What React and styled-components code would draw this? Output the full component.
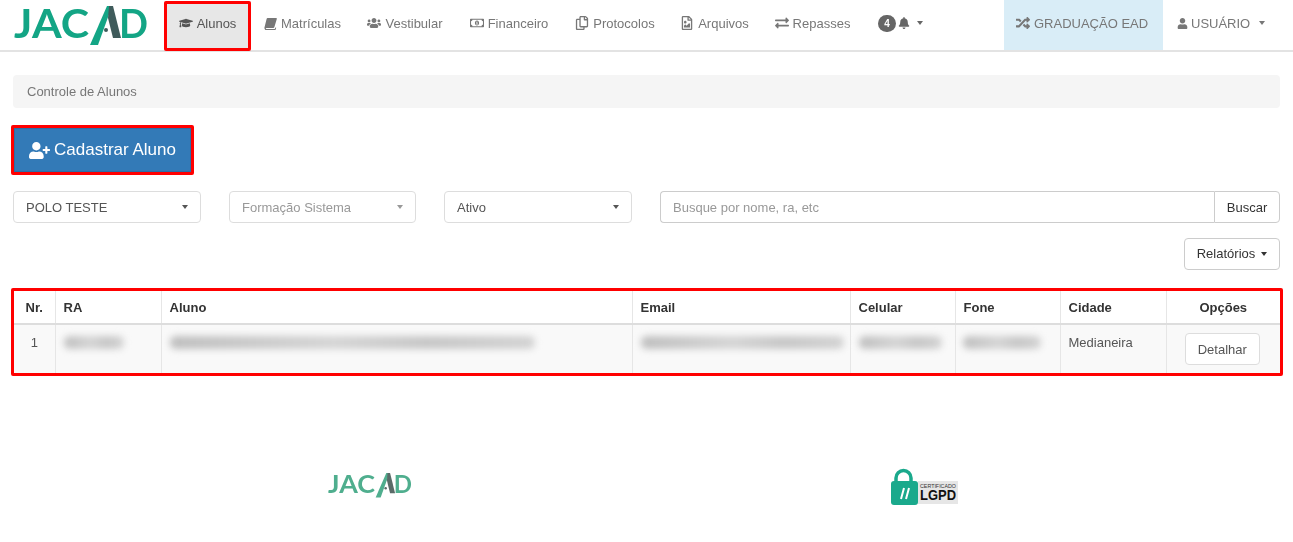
import React from 'react'
import styled, { createGlobalStyle } from 'styled-components'
import {
  FaGraduationCap, FaUsers, FaRegMoneyBillAlt, FaRegCopy, FaRegFileImage,
  FaExchangeAlt, FaBell, FaRandom, FaUser, FaUserPlus,
} from 'react-icons/fa'

const GlobalStyle = createGlobalStyle`
  html, body {
    margin: 0;
    background: #fff;
    font-family: "Liberation Sans", Arial, sans-serif;
    font-size: 13px;
    color: #555;
  }
  * { box-sizing: border-box; }
`

// font awesome 4 book, slanted, not in the packages
const SlantedBook = () => (
  <svg width="13" height="13" viewBox="0 0 13 13" fill="currentColor">
    <path d="M3.6 1h8.6c.5 0 .8.4.6.9L10.4 10c-.2.6-.6.9-1.2.9H2.6c-.5 0-.8.2-.8.5s.3.6.8.6h8.2l.5-1.6.9.3-.8 2.6c-.1.4-.3.6-.7.6H2.4C1.2 13 .3 12.1.4 10.9c0-.3.1-.6.2-.9l2-8c.1-.6.5-1 1-1z" />
  </svg>
)

const navItems = [
  { label: 'Alunos', icon: FaGraduationCap, active: true, width: 87 },
  { label: 'Matrículas', icon: SlantedBook, width: 103 },
  { label: 'Vestibular', icon: FaUsers, width: 102 },
  { label: 'Financeiro', icon: FaRegMoneyBillAlt, width: 106 },
  { label: 'Protocolos', icon: FaRegCopy, width: 106 },
  { label: 'Arquivos', icon: FaRegFileImage, width: 93 },
  { label: 'Repasses', icon: FaExchangeAlt, width: 103 },
]

const Logo = ({ width, main, dark }) => (
  <LogoSvg width={width} viewBox="0 0 134 42" role="img" aria-label="JACAD">
    <text x="0" y="34" fontFamily="Lato, sans-serif" fontWeight="700" fontSize="40" fill={main} textLength="75" lengthAdjust="spacingAndGlyphs">JAC</text>
    <polygon points="76,41 93,2 98,2 84,41" fill={main} />
    <polygon points="95,2 99,2 107,34 99,34 94,14" fill={dark} />
    <circle cx="92" cy="26" r="2" fill={dark} />
    <text x="105" y="34" fontFamily="Lato, sans-serif" fontWeight="700" fontSize="40" fill={main} textLength="29" lengthAdjust="spacingAndGlyphs">D</text>
  </LogoSvg>
)

const LgpdSeal = () => (
  <svg width="68" height="37" viewBox="0 0 68 37" role="img" aria-label="Certificado LGPD">
    <path d="M6 14 V10 a7.5 7.5 0 0 1 15 0 V14" fill="none" stroke="#1aa98c" strokeWidth="3.5" />
    <rect x="1" y="13" width="27" height="24" rx="3" fill="#1aa98c" />
    <path d="M11 31 L14 20 M16 31 L19 20" stroke="#fff" strokeWidth="2" />
    <rect x="28" y="13" width="40" height="23" fill="#e6e6e6" />
    <text x="30" y="20" fontFamily="Liberation Sans, sans-serif" fontSize="5" fill="#333" textLength="36" lengthAdjust="spacingAndGlyphs">CERTIFICADO</text>
    <text x="30" y="32" fontFamily="Liberation Sans, sans-serif" fontWeight="700" fontSize="14" fill="#111" textLength="36" lengthAdjust="spacingAndGlyphs">LGPD</text>
  </svg>
)

export default function App() {
  return (
    <Screen>
      <GlobalStyle />
      <Navbar>
        <Brand>
          <Logo width={134} main="#13a585" dark="#3f5b5b" />
        </Brand>
        {navItems.map(({ label, icon: Icon, active, width }) => (
          <NavItem key={label} $active={active} $width={width}>
            <Icon size={14} />
            {label}
          </NavItem>
        ))}
        <Notifications>
          <Badge>4</Badge>
          <FaBell size={12} />
          <Caret $gap={5} />
        </Notifications>
        <NavRight>
          <Course><FaRandom size={14} />GRADUAÇÃO EAD</Course>
          <UserMenu><FaUser size={11} />USUÁRIO<Caret $gap={6} /></UserMenu>
        </NavRight>
      </Navbar>

      <Page>
        <Breadcrumb>Controle de Alunos</Breadcrumb>

        <Highlight>
          <PrimaryButton><FaUserPlus size={21} />Cadastrar Aluno</PrimaryButton>
        </Highlight>

        <Filters>
          <SelectBox $width={188}>POLO TESTE<Caret /></SelectBox>
          <SelectBox $width={187} $muted>Formação Sistema<Caret /></SelectBox>
          <SelectBox $width={188}>Ativo<Caret /></SelectBox>
          <SearchGroup>
            <SearchInput placeholder="Busque por nome, ra, etc" />
            <SearchButton>Buscar</SearchButton>
          </SearchGroup>
        </Filters>

        <Actions>
          <DefaultButton>Relatórios<Caret $gap={6} /></DefaultButton>
        </Actions>

        <TableFrame>
          <Table>
            <colgroup>
              {[41, 106, 471, 218, 105, 105, 106, 114].map((w, i) => <col key={i} width={w} />)}
            </colgroup>
            <thead>
              <tr>
                <Th $center>Nr.</Th>
                <Th>RA</Th>
                <Th>Aluno</Th>
                <Th>Email</Th>
                <Th>Celular</Th>
                <Th>Fone</Th>
                <Th>Cidade</Th>
                <Th $center>Opções</Th>
              </tr>
            </thead>
            <tbody>
              <tr>
                <Td $center>1</Td>
                <Td><Redacted $width={60} /></Td>
                <Td><Redacted $width={365} /></Td>
                <Td><Redacted $width={203} /></Td>
                <Td><Redacted $width={83} /></Td>
                <Td><Redacted $width={78} $left={-1} /></Td>
                <Td>Medianeira</Td>
                <Td $center><DetailButton>Detalhar</DetailButton></Td>
              </tr>
            </tbody>
          </Table>
        </TableFrame>

        <Footer>
          <FooterCell><Logo width={84} main="#4fae8e" dark="#5a6b68" /></FooterCell>
          <FooterCell $top={3}><LgpdSeal /></FooterCell>
        </Footer>
      </Page>
    </Screen>
  )
}

const Screen = styled.div`
  filter: blur(0.4px);
`
const LogoSvg = styled.svg`
  overflow: visible;
`
const Navbar = styled.nav`
  display: flex;
  height: 52px;
  padding-left: 14px;
  border-bottom: 2px solid #e3e3e3;
`
const Brand = styled.div`
  display: flex;
  align-items: center;
  width: 150px;
`
const NavItem = styled.a`
  display: flex;
  align-items: center;
  justify-content: center;
  gap: 4px;
  width: ${(p) => p.$width}px;
  height: 50px;
  margin-top: 1px;
  padding-bottom: 6px;
  color: ${(p) => (p.$active ? '#555' : '#777')};
  background: ${(p) => (p.$active ? '#e7e7e7' : 'transparent')};
  box-shadow: ${(p) => (p.$active ? 'inset 0 0 0 3px #f00' : 'none')};
  border-radius: 2px;
`
const Notifications = styled.div`
  display: flex;
  align-items: center;
  gap: 2px;
  margin-left: 14px;
  height: 50px;
  padding-bottom: 4px;
  color: #666;
`
const Badge = styled.span`
  width: 18px;
  height: 17px;
  border-radius: 9px;
  background: #666;
  color: #fff;
  font-size: 10px;
  font-weight: 700;
  line-height: 17px;
  text-align: center;
`
const NavRight = styled.div`
  display: flex;
  margin-left: 81px;
`
const Course = styled.div`
  display: flex;
  align-items: center;
  gap: 4px;
  width: 159px;
  height: 50px;
  padding: 0 0 4px 12px;
  color: #777;
  background: #d9edf7;
  white-space: nowrap;
`
const UserMenu = styled.div`
  display: flex;
  align-items: center;
  gap: 3px;
  height: 50px;
  padding: 0 0 4px 14px;
  color: #777;
`
const Caret = styled.span`
  display: inline-block;
  margin-left: ${(p) => p.$gap || 8}px;
  border-top: 4px solid currentColor;
  border-left: 3.5px solid transparent;
  border-right: 3.5px solid transparent;
`
const Page = styled.main`
  padding: 23px 13px 0;
`
const Breadcrumb = styled.div`
  height: 33px;
  padding: 0 14px;
  border-radius: 4px;
  background: #f5f5f5;
  color: #777;
  line-height: 33px;
`
const Highlight = styled.div`
  width: 183px;
  height: 50px;
  margin: 17px 0 0 -2px;
  border: 3px solid #f00;
  border-radius: 2px;
`
const PrimaryButton = styled.button`
  display: flex;
  align-items: center;
  justify-content: center;
  gap: 4px;
  width: 100%;
  height: 100%;
  border: 1px solid #2e6da4;
  background: #337ab7;
  color: #fff;
  font: 17px "Liberation Sans", Arial, sans-serif;
`
const Filters = styled.div`
  display: flex;
  margin-top: 16px;
  gap: 28px;
`
const SelectBox = styled.div`
  display: flex;
  align-items: center;
  justify-content: space-between;
  width: ${(p) => p.$width}px;
  height: 32px;
  padding: 0 12px;
  border: 1px solid #ddd;
  border-radius: 4px;
  background: #fff;
  color: ${(p) => (p.$muted ? '#999' : '#555')};
`
const SearchGroup = styled.div`
  display: flex;
  flex: 1;
`
const SearchInput = styled.input`
  flex: 1;
  height: 32px;
  padding: 0 12px;
  border: 1px solid #ccc;
  border-right: 0;
  border-radius: 4px 0 0 4px;
  font: 13px "Liberation Sans", Arial, sans-serif;
  &::placeholder { color: #999; opacity: 1; }
`
const SearchButton = styled.button`
  width: 66px;
  height: 32px;
  border: 1px solid #ccc;
  border-radius: 0 4px 4px 0;
  background: #fff;
  color: #333;
  font: 13px "Liberation Sans", Arial, sans-serif;
`
const Actions = styled.div`
  display: flex;
  justify-content: flex-end;
  margin-top: 15px;
`
const DefaultButton = styled.button`
  display: flex;
  align-items: center;
  justify-content: center;
  width: 96px;
  height: 32px;
  padding-bottom: 2px;
  border: 1px solid #ccc;
  border-radius: 4px;
  background: #fff;
  color: #333;
  font: 13px "Liberation Sans", Arial, sans-serif;
`
const TableFrame = styled.div`
  width: 1272px;
  margin: 18px 0 0 -2px;
  border: 3px solid #f00;
  border-radius: 2px;
`
const Table = styled.table`
  width: 100%;
  table-layout: fixed;
  border-collapse: collapse;
`
const Th = styled.th`
  height: 33px;
  padding: 0 8px;
  border-left: 1px solid #e6e6e6;
  border-bottom: 2px solid #ddd;
  color: #333;
  font-size: 13px;
  text-align: ${(p) => (p.$center ? 'center' : 'left')};
  &:first-child { border-left: 0; }
`
const Td = styled.td`
  height: 47px;
  padding: 8px;
  border-left: 1px solid #e6e6e6;
  background: #f9f9f9;
  vertical-align: top;
  line-height: 19px;
  text-align: ${(p) => (p.$center ? 'center' : 'left')};
  &:first-child { border-left: 0; }
`
const Redacted = styled.div`
  width: ${(p) => p.$width}px;
  height: 13px;
  margin: 3px 0 0 ${(p) => p.$left || 0}px;
  border-radius: 6px;
  background: linear-gradient(90deg, #bebebe, #d4d4d4 45%, #c6c6c6 70%, #d2d2d2);
  filter: blur(3.5px);
`
const DetailButton = styled.button`
  width: 75px;
  height: 32px;
  margin-left: -2px;
  border: 1px solid #ddd;
  border-radius: 4px;
  background: #fff;
  color: #555;
  font: 13px "Liberation Sans", Arial, sans-serif;
`
const Footer = styled.footer`
  display: grid;
  grid-template-columns: 554px 554px;
  margin: 89px 0 0 80px;
`
const FooterCell = styled.div`
  display: flex;
  justify-content: center;
  padding-top: ${(p) => p.$top || 0}px;
`
